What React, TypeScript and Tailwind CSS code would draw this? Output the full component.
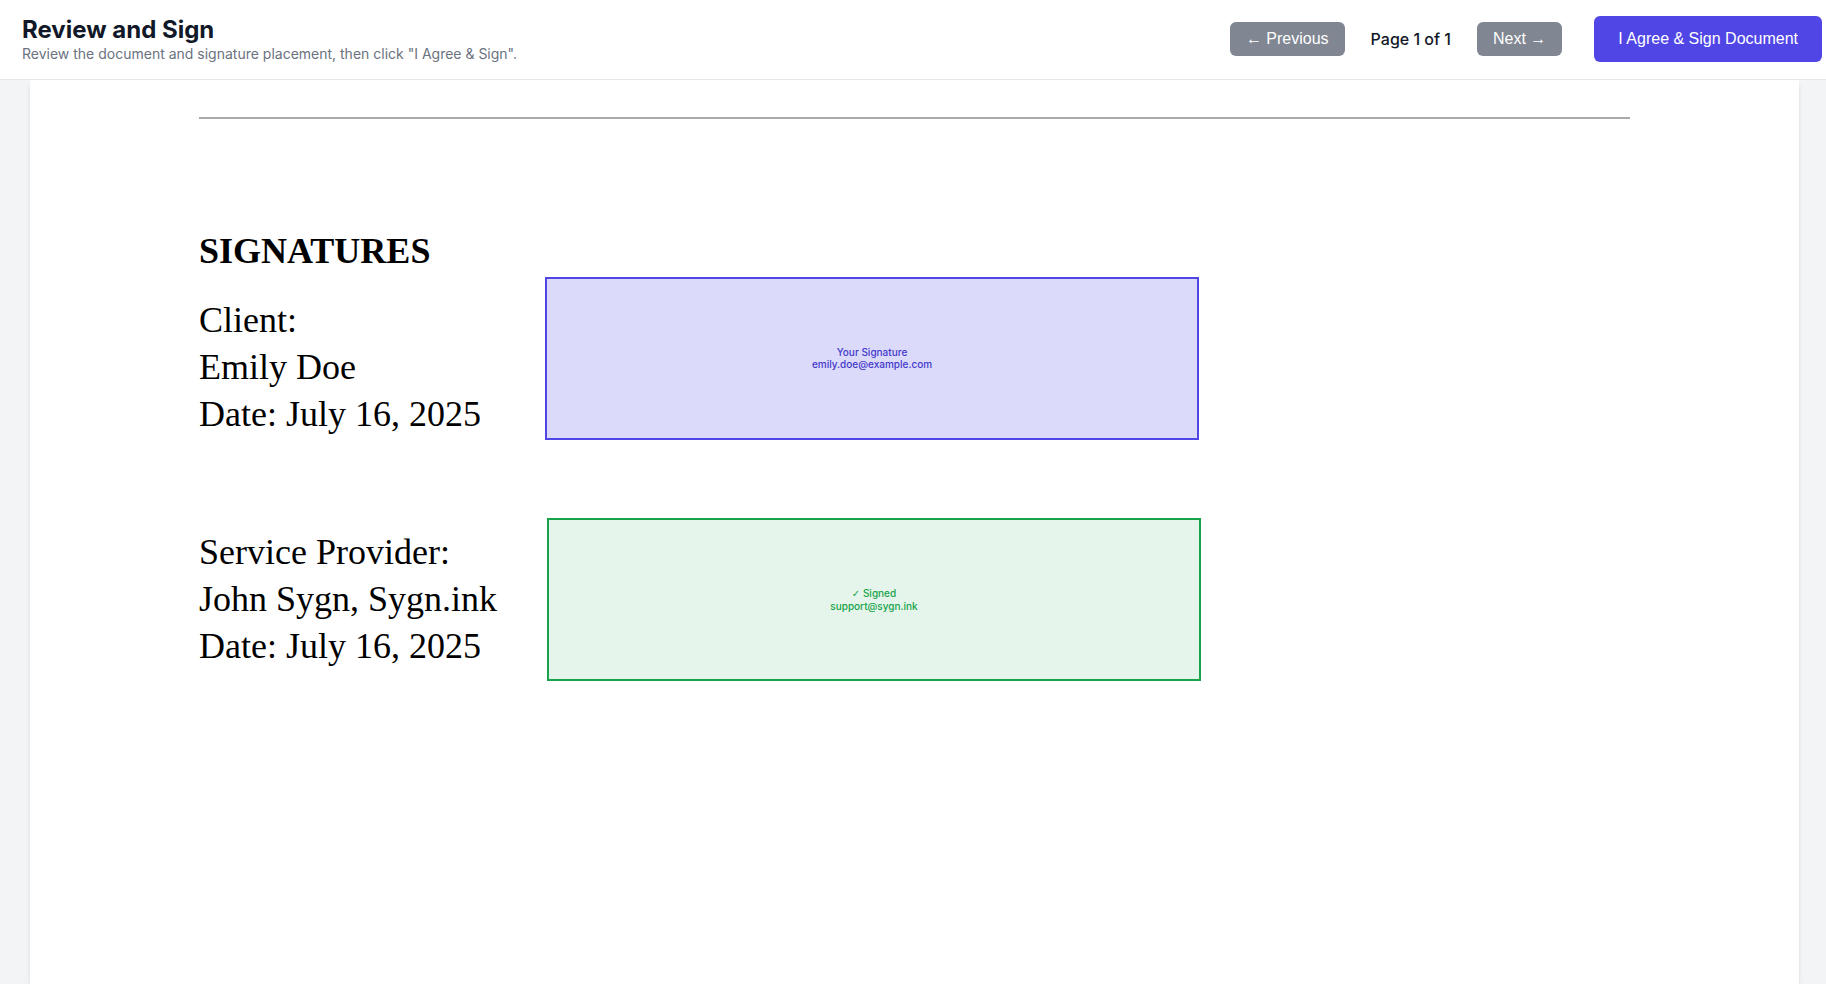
import { useState } from "react"

type SignatureStatus = "pending" | "signed"

type Party = {
  role: string
  name: string
  date: string
  email: string
  status: SignatureStatus
}

const TOTAL_PAGES = 1

const parties: Party[] = [
  {
    role: "Client:",
    name: "Emily Doe",
    date: "Date: July 16, 2025",
    email: "emily.doe@example.com",
    status: "pending",
  },
  {
    role: "Service Provider:",
    name: "John Sygn, Sygn.ink",
    date: "Date: July 16, 2025",
    email: "support@sygn.ink",
    status: "signed",
  },
]

const fieldStyles: Record<SignatureStatus, string> = {
  pending: "border-[#4f46e5] bg-[#dbdafa] text-[#4338ca]",
  signed: "ml-[2px] border-[#16a34a] bg-[#e5f5eb] text-[#16a34a]",
}

type PageButtonProps = {
  onClick: () => void
  disabled: boolean
  children: React.ReactNode
}

const PageButton: React.FC<PageButtonProps> = ({
  onClick,
  disabled,
  children,
}) => (
  <button
    type="button"
    onClick={onClick}
    disabled={disabled}
    className="rounded-md bg-[#6b7280] px-4 py-[5px] font-['Liberation_Sans',sans-serif] text-base text-white disabled:opacity-85"
  >
    {children}
  </button>
)

const SignatureField: React.FC<{ email: string; status: SignatureStatus }> = ({
  email,
  status,
}) => (
  <div
    className={`flex h-[163px] w-[654px] flex-col items-center justify-center border-2 pb-px text-center text-[10px] leading-3 font-medium ${fieldStyles[status]}`}
  >
    {status === "signed" ? (
      <span>
        <span className="font-['DejaVu_Sans',sans-serif]">✓</span> Signed
      </span>
    ) : (
      <span>Your Signature</span>
    )}
    <span>{email}</span>
  </div>
)

export default function App() {
  const [page, setPage] = useState<number>(1)
  const [agreed, setAgreed] = useState<boolean>(false)

  return (
    <div className="flex min-h-screen flex-col bg-[#f3f4f6] font-['Inter',sans-serif] text-[#111827]">
      <header className="z-10 flex items-start justify-between border-b border-[#e5e7eb] bg-white pt-4 pr-1 pb-[15px] pl-[22px]">
        <div>
          <h1 className="text-2xl leading-7 font-bold">Review and Sign</h1>
          <p className="text-sm text-[#6b7280]">
            Review the document and signature placement, then click "I Agree
            &amp; Sign".
          </p>
        </div>
        <div className="flex items-center gap-8">
          <nav className="flex items-center gap-[26px]">
            <PageButton onClick={() => setPage(page - 1)} disabled={page <= 1}>
              ← Previous
            </PageButton>
            <span className="font-medium">
              Page {page} of {TOTAL_PAGES}
            </span>
            <PageButton
              onClick={() => setPage(page + 1)}
              disabled={page >= TOTAL_PAGES}
            >
              Next →
            </PageButton>
          </nav>
          <button
            type="button"
            onClick={() => setAgreed(true)}
            disabled={agreed}
            className="rounded-md bg-[#4f46e5] px-6 py-[11px] font-['Liberation_Sans',sans-serif] text-base text-white"
          >
            I Agree &amp; Sign Document
          </button>
        </div>
      </header>

      <main className="flex flex-1 flex-col pr-[27px] pl-[30px]">
        <article className="flex-1 bg-white px-[169px] pt-[37px] font-['Liberation_Serif',serif] text-4xl leading-[47px] text-black shadow-md">
          <hr className="border-t-2 border-[#a9a9a9]" />
          <h2 className="mt-[109px] font-bold">SIGNATURES</h2>
          <div className="mt-[2px] flex items-start">
            <div className="flex w-[346px] shrink-0 flex-col gap-[91px] pt-5">
              {parties.map((party) => (
                <section key={party.email}>
                  <p>{party.role}</p>
                  <p>{party.name}</p>
                  <p>{party.date}</p>
                </section>
              ))}
            </div>
            <div className="flex flex-col gap-[78px] font-['Inter',sans-serif]">
              {parties.map((party) => (
                <SignatureField
                  key={party.email}
                  email={party.email}
                  status={party.status}
                />
              ))}
            </div>
          </div>
        </article>
      </main>
    </div>
  )
}
